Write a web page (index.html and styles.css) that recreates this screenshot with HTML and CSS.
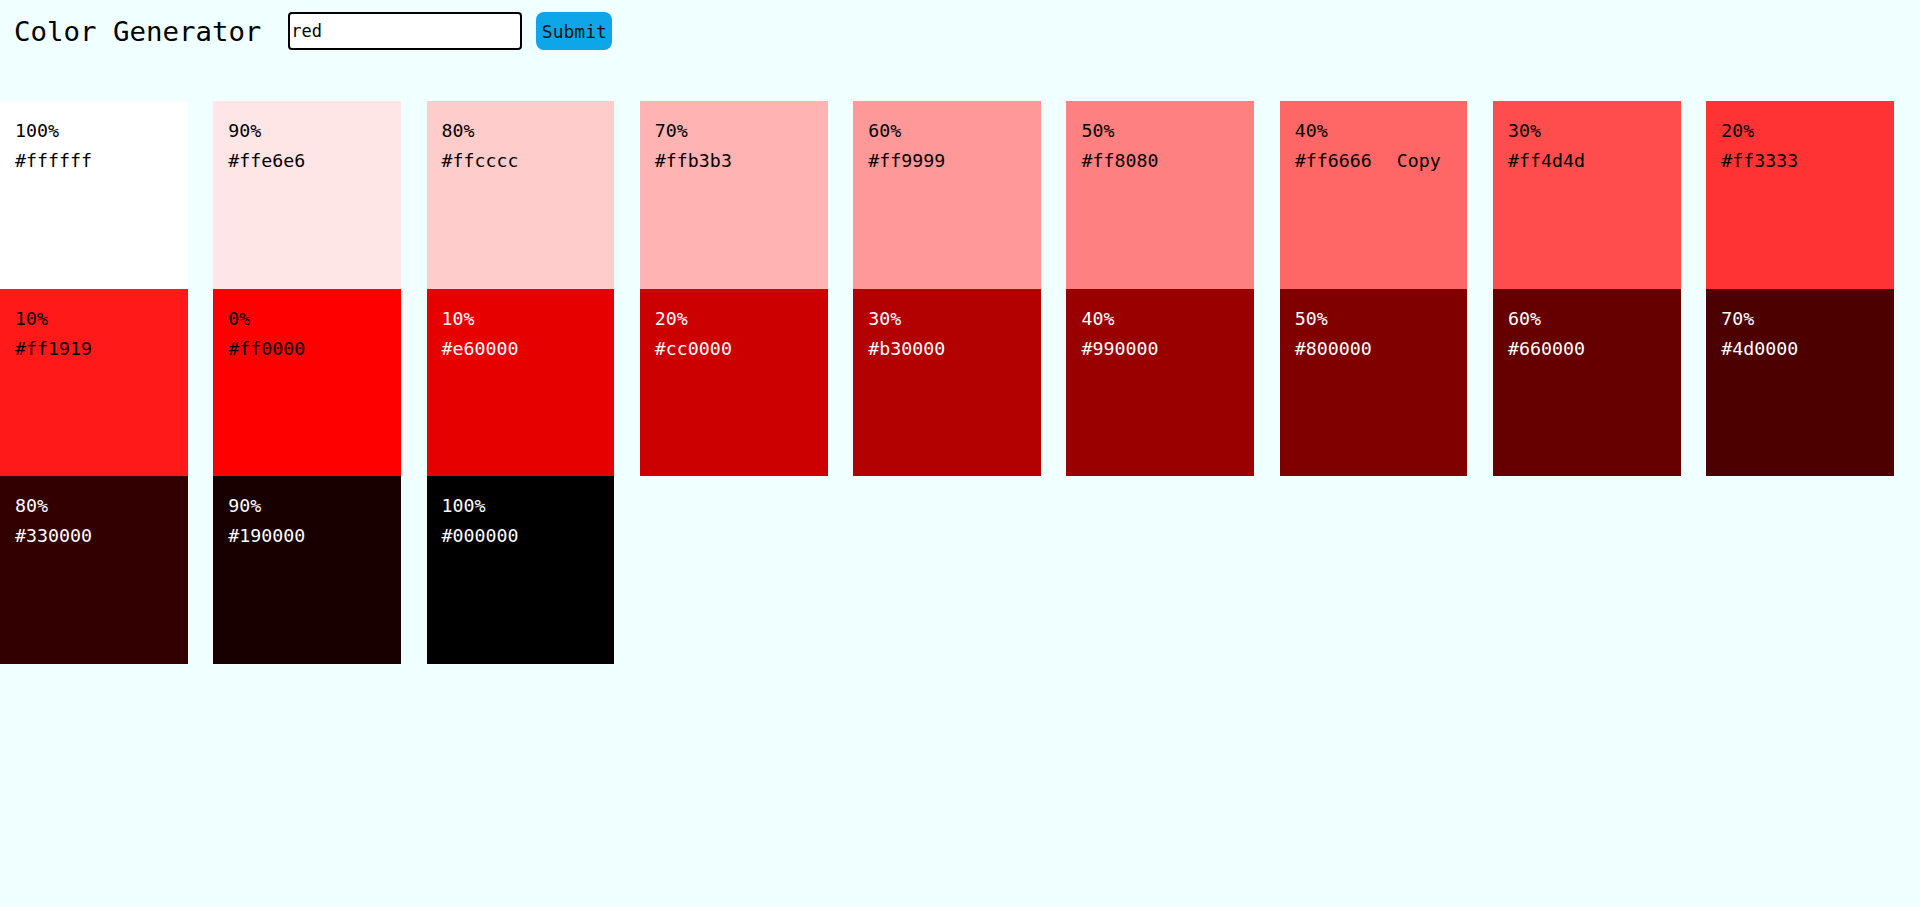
FILE: index.html
```html
<!DOCTYPE html>
<html lang="en">
<head>
<meta charset="utf-8">
<title>Color Generator</title>
<link rel="stylesheet" href="styles.css">
</head>
<body>
<section class="container">
  <h3 class="title">Color Generator</h3>
  <form class="form">
    <input class="field" type="text" value="red">
    <button class="btn" type="button">Submit</button>
  </form>
</section>
<section class="colors">
  <article class="color"><p class="percent">100%</p><p class="hex">#ffffff</p></article>
  <article class="color c-ffe6e6"><p class="percent">90%</p><p class="hex">#ffe6e6</p></article>
  <article class="color c-ffcccc"><p class="percent">80%</p><p class="hex">#ffcccc</p></article>
  <article class="color c-ffb3b3"><p class="percent">70%</p><p class="hex">#ffb3b3</p></article>
  <article class="color c-ff9999"><p class="percent">60%</p><p class="hex">#ff9999</p></article>
  <article class="color c-ff8080"><p class="percent">50%</p><p class="hex">#ff8080</p></article>
  <article class="color c-ff6666"><p class="percent">40%</p><p class="hex">#ff6666<span class="copy">Copy</span></p></article>
  <article class="color c-ff4d4d"><p class="percent">30%</p><p class="hex">#ff4d4d</p></article>
  <article class="color c-ff3333"><p class="percent">20%</p><p class="hex">#ff3333</p></article>
  <article class="color c-ff1919"><p class="percent">10%</p><p class="hex">#ff1919</p></article>
  <article class="color c-ff0000"><p class="percent">0%</p><p class="hex">#ff0000</p></article>
  <article class="color dark c-e60000"><p class="percent">10%</p><p class="hex">#e60000</p></article>
  <article class="color dark c-cc0000"><p class="percent">20%</p><p class="hex">#cc0000</p></article>
  <article class="color dark c-b30000"><p class="percent">30%</p><p class="hex">#b30000</p></article>
  <article class="color dark c-990000"><p class="percent">40%</p><p class="hex">#990000</p></article>
  <article class="color dark c-800000"><p class="percent">50%</p><p class="hex">#800000</p></article>
  <article class="color dark c-660000"><p class="percent">60%</p><p class="hex">#660000</p></article>
  <article class="color dark c-4d0000"><p class="percent">70%</p><p class="hex">#4d0000</p></article>
  <article class="color dark c-330000"><p class="percent">80%</p><p class="hex">#330000</p></article>
  <article class="color dark c-190000"><p class="percent">90%</p><p class="hex">#190000</p></article>
  <article class="color dark c-000000"><p class="percent">100%</p><p class="hex">#000000</p></article>
</section>
</body>
</html>
```
FILE: styles.css
```css
* { box-sizing: border-box; }

body {
  margin: 0;
  background: #f0ffff;
  font-family: "DejaVu Sans Mono", "Liberation Mono", monospace;
  color: #000;
}

.container {
  display: flex;
  align-items: flex-start;
  padding: 12px 13px 0 14px;
  height: 101px;
}

.title {
  margin: 1px 27px 0 0;
  font-weight: normal;
  font-size: 27.4px;
  line-height: 38px;
  height: 38px;
}

.form {
  display: flex;
  align-items: center;
  gap: 14px;
}

.field {
  width: 234px;
  height: 38px;
  border: 2px solid #000;
  border-radius: 4px;
  background: #fff;
  padding: 0 1px;
  font-family: "DejaVu Sans Mono", monospace;
  font-size: 17px;
  color: #000;
  outline: none;
}

.btn {
  height: 38px;
  width: 76px;
  border: none;
  border-radius: 8px;
  background: #0ea5e9;
  color: #111;
  padding: 0;
  font-family: "DejaVu Sans Mono", monospace;
  font-size: 18px;
}

.colors {
  display: grid;
  grid-template-columns: repeat(9, 187.7px);
  grid-auto-rows: 187.7px;
  column-gap: 25.6px;
}

.color {
  background: #fff;
  padding: 15px 15px;
  font-size: 18.3px;
  color: #000;
}

.color p {
  margin: 0;
  line-height: 30px;
}

.color.dark { color: #fff; }

.copy { margin-left: 25px; }

.c-ffe6e6 { background: #ffe6e6; }
.c-ffcccc { background: #ffcccc; }
.c-ffb3b3 { background: #ffb3b3; }
.c-ff9999 { background: #ff9999; }
.c-ff8080 { background: #ff8080; }
.c-ff6666 { background: #ff6666; }
.c-ff4d4d { background: #ff4d4d; }
.c-ff3333 { background: #ff3333; }
.c-ff1919 { background: #ff1919; }
.c-ff0000 { background: #ff0000; }
.c-e60000 { background: #e60000; }
.c-cc0000 { background: #cc0000; }
.c-b30000 { background: #b30000; }
.c-990000 { background: #990000; }
.c-800000 { background: #800000; }
.c-660000 { background: #660000; }
.c-4d0000 { background: #4d0000; }
.c-330000 { background: #330000; }
.c-190000 { background: #190000; }
.c-000000 { background: #000000; }
```
